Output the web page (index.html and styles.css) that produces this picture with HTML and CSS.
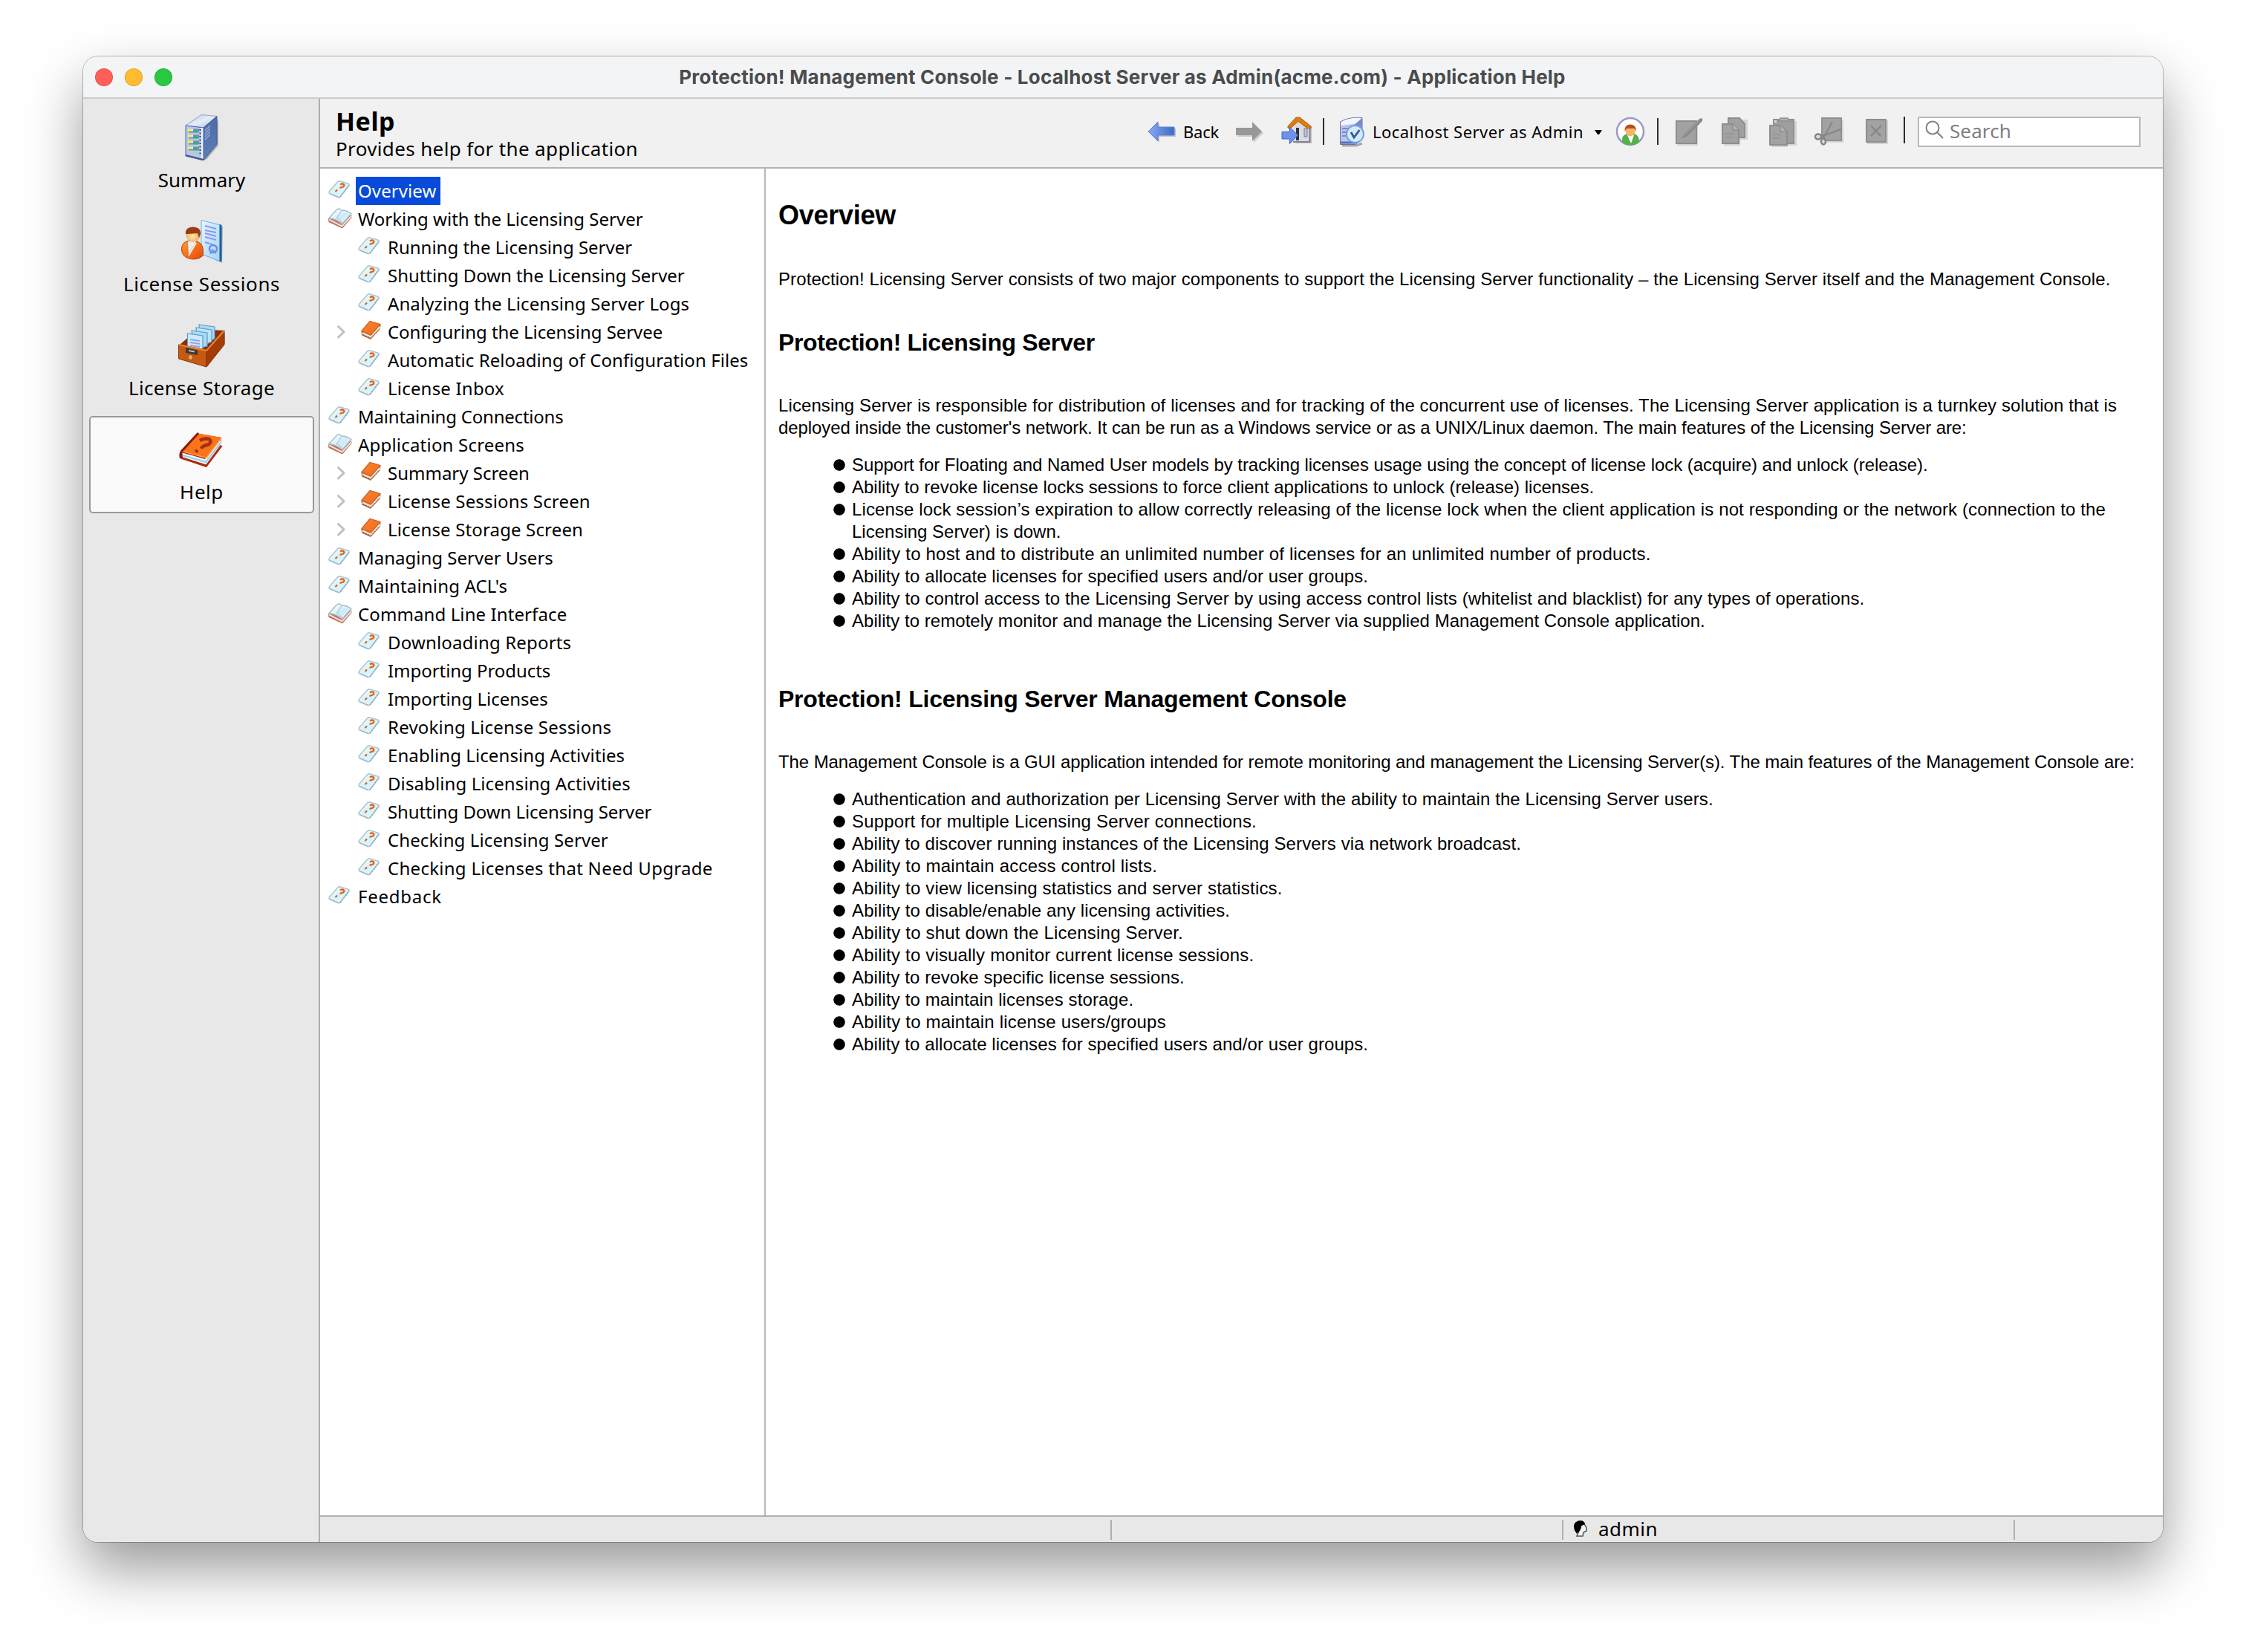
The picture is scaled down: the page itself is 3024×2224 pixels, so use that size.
FILE: index.html
```
<!DOCTYPE html>
<html lang="en">
<head>
<meta charset="utf-8">
<title>Protection! Management Console</title>
<link rel="stylesheet" href="styles.css">
</head>
<body>
<svg class="defs" width="0" height="0" aria-hidden="true">
  <defs>
    <linearGradient id="gPage" x1="0" y1="0" x2="1" y2="1"><stop offset="0" stop-color="#fff"/><stop offset=".5" stop-color="#d5f2fb"/><stop offset="1" stop-color="#e8fafe"/></linearGradient>
    <linearGradient id="gOrange" x1="0" y1="0" x2="1" y2="1"><stop offset="0" stop-color="#f98436"/><stop offset="1" stop-color="#f46a14"/></linearGradient>
    <linearGradient id="gBlue" x1="0" y1="0" x2="1" y2="0"><stop offset="0" stop-color="#8ea6f4"/><stop offset="1" stop-color="#3c6cc4"/></linearGradient>
    <linearGradient id="gSide" x1="0" y1="0" x2="0" y2="1"><stop offset="0" stop-color="#4c6aa4"/><stop offset="1" stop-color="#5f7fba"/></linearGradient>
    <linearGradient id="gTop" x1="0" y1="0" x2="1" y2="1"><stop offset="0" stop-color="#b4c4e2"/><stop offset=".5" stop-color="#e6eefa"/><stop offset="1" stop-color="#a4b6da"/></linearGradient>
    <linearGradient id="gDoc" x1="0" y1="0" x2="1" y2="1"><stop offset="0" stop-color="#e6f6ff"/><stop offset="1" stop-color="#9cd6fb"/></linearGradient>
    <radialGradient id="gSkin" cx=".45" cy=".6" r=".6"><stop offset="0" stop-color="#ffe6a8"/><stop offset="1" stop-color="#f0a050"/></radialGradient>
    <linearGradient id="gBody" x1="0" y1="0" x2="1" y2="1"><stop offset="0" stop-color="#ffa02c"/><stop offset="1" stop-color="#e8440a"/></linearGradient>
    <symbol id="page" viewBox="0 0 39 38">
      <path d="M3.500 19.500 14.500 7q1.500-1.500 3.500-1l10.500 3q2.500 1 1 3.200L18.500 26.500q-1.500 1.600-3.500 1L4.500 23q-2.200-1.200-1-3.500z" fill="url(#gPage)" stroke="#b4c4cc" stroke-width="1.600"/>
      <path d="M18 27 30 11.500" stroke="#86a8bc" stroke-width="1.500" stroke-dasharray="2.500 1.200" fill="none"/>
      <path d="M4 22.500 16 27.500" stroke="#9ab8c8" stroke-width="1.300" fill="none"/>
      <path d="M18 10.500q2.500-1.800 4.500-.500 2 1.800-.500 3.500l-4.500 1.500M14 17.500l-2.500 2.500" fill="none" stroke="#e0600e" stroke-width="2.200"/>
    </symbol>
    <symbol id="open" viewBox="0 0 39 38">
      <path d="M2 19 10 9 34 14 33.500 17 21 31.500 2.500 23z" fill="#c86a50"/>
      <path d="M3 19.500 20.500 28.500 33.500 14.500" fill="none" stroke="#e4e4e4" stroke-width="2"/>
      <path d="M3 17.500 13.500 6q4-2.500 6.500 1.500 5-1.500 13 4L20.500 25.500Q15 19.500 3 17.500z" fill="url(#gPage)" stroke="#a9bccb" stroke-width="1.400"/>
      <path d="M19.500 8.500 13.500 17.500q5 2 7 6.500" fill="none" stroke="#a8c4d8" stroke-width="1.300"/>
      <path d="M15.500 17 23.500 9.500 30 12 21 21.500z" fill="#cfecf8"/>
    </symbol>
    <symbol id="closed" viewBox="0 0 39 38">
      <path d="M6.500 18 18 5 32.500 9.500 32 15 19 29 7 23.500z" fill="#b46a3a"/>
      <path d="M8 20.500 19 25.500 31.500 12" fill="none" stroke="#eee6dc" stroke-width="3"/>
      <path d="M9 22.500 19 27 31 14.500" fill="none" stroke="#7b5038" stroke-width="1" stroke-dasharray="2 1.500"/>
      <path d="M7 17.500 18 4.500 32 8.500 19.500 23z" fill="url(#gOrange)" stroke="#c8622a" stroke-width="1.200"/>
    </symbol>
    <symbol id="chev" viewBox="0 0 40 38"><path d="M15.500 11.500 23 18.800 15.500 26" fill="none" stroke="#c0c0c0" stroke-width="3" stroke-linecap="round" stroke-linejoin="round"/></symbol>
  </defs>
</svg>

<div class="window">
  <header class="titlebar">
    <div class="lights"><i class="light red"></i><i class="light yellow"></i><i class="light green"></i></div>
    <div class="title"><span class="p20">Protection! Management Console - Localhost Server as Admin(acme.com) - Application Help</span></div>
  </header>
  <div class="main">
    <nav class="sidebar">
      <a class="item">
        <svg width="64" height="64" viewBox="0 0 64 64">
          <path d="M36 65 54 44 54 8 40 40z" fill="#000" opacity=".25"/>
          <path d="M10 17 31 2.500 52 4.500 34 20z" fill="url(#gTop)" stroke="#93a6cc"/>
          <path d="M34 20 52 4.500V42L34 64z" fill="url(#gSide)" stroke="#3f5c94"/>
          <path d="M10 17 34 20V64L10 58z" fill="#b9c8e2" stroke="#4d6aa2"/>
          <path d="M32 20V62" stroke="#e8f0fa" stroke-width="2.500"/>
          <path d="M14 24H28M14 32H28M14 40H28M14 48H28" stroke="#6f8cc0" stroke-width="5"/>
          <path d="M13 23H20M13 31H20M13 39H20M13 47H20" stroke="#eef0e0" stroke-width="3"/>
          <path d="M14 23H17M14 31H17M14 39H17M14 47H17" stroke="#ffee00" stroke-width="3"/>
          <path d="M22 25H25M22 33H25M22 41H25M22 49H25" stroke="#08d818" stroke-width="3"/>
          <path d="M29.500 22V58" stroke="#2c4884" stroke-width="2" stroke-dasharray="2 2.500"/>
          <path d="M36 24 43 17M36 28 43 21M36 32 43 25M36 36 43 29" stroke="#93a9d4" stroke-width="1.500"/>
          <path d="M10 57 34 63" stroke="#3c598f" stroke-width="2"/>
        </svg>
        <span>Summary</span>
      </a>
      <a class="item">
        <svg width="64" height="64" viewBox="0 0 64 64">
          <path d="M32 50 59 62 60 12z" fill="#000" opacity=".25"/>
          <path d="M31 4.500 57 11V60L31 50z" fill="url(#gDoc)" stroke="#7fa6d8"/>
          <path d="M57 10.500V60" stroke="#1d5f9c" stroke-width="3"/>
          <path d="M36 12 51 16M36 18 51 21M36 22 51 26M36 27 51 31M36 34 46 37" stroke="#8f96ee" stroke-width="2"/>
          <circle cx="47" cy="43" r="5" fill="none" stroke="#7388e8" stroke-width="2.500"/><path d="M43 50 46 44 51 49" stroke="#7388e8" stroke-width="1.500" fill="none"/>
          <path d="M4.500 43q0-9 10-11h9q9 3 10 12v8q-5 5-12 5-9 0-14-5-3-3-3-9z" fill="url(#gBody)" stroke="#b8430f"/>
          <path d="M13 33 14 50 24 33z" fill="#e4effa"/><path d="M14 52 24 35" stroke="#fff" stroke-width="1.500"/>
          <ellipse cx="20" cy="24" rx="9.500" ry="10" fill="url(#gSkin)"/>
          <path d="M10 23q-1-9 10-9.500 11 .500 10 9.500l-2 5-2-6q-9 1-16 1z" fill="#9c3a14"/>
        </svg>
        <span class="p55">License Sessions</span>
      </a>
      <a class="item">
        <svg width="64" height="64" viewBox="0 0 64 64">
          <path d="M38 63 63 30V15L50 40z" fill="#000" opacity=".3"/>
          <path d="M1 33 26 11 62 13 38 40z" fill="#8c2e06"/>
          <path d="M28 5 49 8V24L30 34z" fill="#a9daf6" stroke="#5b9cc8" stroke-width="1.200"/>
          <path d="M24 9 45 12V28L26 36z" fill="#bbe4fa" stroke="#5b9cc8" stroke-width="1.200"/>
          <path d="M18 13 39 16V34L22 38z" fill="#a9daf6" stroke="#5b9cc8" stroke-width="1.200"/>
          <path d="M12.500 17 33 20V42L12.500 36z" fill="#cdeaff" stroke="#5b9cc8" stroke-width="1.200"/>
          <path d="M16 25 29 27M16 29 29 31M16 33 29 35" stroke="#9aa0e6" stroke-width="2"/>
          <path d="M0.500 32 38 39V62L0.500 51z" fill="#c65a10" stroke="#8f3606"/>
          <path d="M38 39 62 13V32L38 62z" fill="#a63c05" stroke="#8a3104"/>
          <path d="M1 32 38 40 61 14" fill="none" stroke="#e38a38" stroke-width="2"/>
          <path d="M10 36 26 39.500V46L10 43z" fill="#3d3835"/><path d="M14 40 22 41.500" stroke="#bbb" stroke-width="2"/>
          <circle cx="16.500" cy="49" r="3.500" fill="#f0a868" stroke="#a04408"/>
        </svg>
        <span class="p32">License Storage</span>
      </a>
      <a class="item active">
        <svg width="64" height="64" viewBox="0 0 64 64">
          <path d="M3 36 28 12 58 17 57 28 38 57 4 45z" fill="#a41e06"/>
          <path d="M5.500 37.500 36 46 57 19 57.500 26 37.500 53.500 6 43.500z" fill="#e8fbff"/>
          <path d="M6 41 37 50 57 24" fill="none" stroke="#9ccbe0" stroke-width="2"/>
          <path d="M4 44.500 37.500 55.500 58.500 28" fill="none" stroke="#b02a0a" stroke-width="2.500"/>
          <path d="M4.500 34.500 27 11.500 59 17.500 38 44.500z" fill="#fa7419"/>
          <path d="M5 35.500 38 44.500 58 18" fill="none" stroke="#ffa65c" stroke-width="1.500"/>
          <path d="M3.500 45q-1.500-6 1-9.500L27 11" fill="none" stroke="#8e1408" stroke-width="3"/>
          <path d="M29 21q7-4 13-1.500 4 4-2.500 7.500-7 1-8.500 5M26 34l-2.500 2.500" fill="none" stroke="#a82e10" stroke-width="4.500"/>
        </svg>
        <span class="p55">Help</span>
      </a>
    </nav>
    <section class="workspace">
      <div class="header">
        <div class="heading">
          <h1><span class="p55">Help</span></h1>
          <p><span class="p36">Provides help for the application</span></p>
        </div>
        <div class="toolbar">
          <svg width="40" height="44"><path d="M4 24 17 11V18H39V29H17V37z" opacity=".2"/><path d="M2 22 15 9V16H37V27H15V35z" fill="url(#gBlue)" stroke="#5f80d8"/></svg>
          <span class="tb-label back n22">Back</span>
          <svg class="fwd" width="40" height="44"><path d="M4 19H26V11L39 24 26 37V29H4z" opacity=".15"/><path d="M2 17H24V9L37 22 24 35V27H2z" fill="#989898"/></svg>
          <svg class="home" width="44" height="44"><path d="M20 38H42V14z" opacity=".2"/><path d="M17 17 24 9 38 17V36H17z" fill="#dcdbe2"/><path d="M17 36H39.500V17" fill="none" stroke="#85839a" stroke-width="2"/><path d="M21 17H25V34H21z" fill="#30323c"/><path d="M32 18H36V29H32z" fill="#c2c4d6" stroke="#777998"/><path d="M10 15 21 3H26L41 15V17.500H36L24 8.500 13 18.500 10 17z" fill="#d97e14" stroke="#b35a10"/><path d="M2 22.500H12.500V16L23.500 27 12.500 38.500V32H2z" fill="#6d92ec" stroke="#3e66c4"/></svg>
          <i class="sep s1"></i>
          <svg class="srv" width="38" height="44"><path d="M5 41H24L32 38" stroke="#000" stroke-width="3" opacity=".3" fill="none"/><path d="M2.500 9Q14 2 32 3.500V32L23 39.500H2.500z" fill="#bcc4ec" stroke="#6a70b0"/><path d="M3 9.500Q14 3 31 4L23 11.500 3 14z" fill="#f4f6ff"/><path d="M23 11.500V39M5 18H15M5 23H11M5 28H10" stroke="#8088c4" stroke-width="2"/><path d="M24 11 32 4V32L24 39z" fill="#7d88cc"/><path d="M3 37H22" stroke="#5870c0" stroke-width="3"/><circle cx="22.500" cy="25.500" r="11.500" fill="#d2ebff" stroke="#6ba3dc" stroke-width="2"/><path d="M17 23 21 30 28.500 20" fill="none" stroke="#3a5490" stroke-width="2.800"/></svg>
          <span class="tb-label conn p46">Localhost Server as Admin</span>
          <svg class="caret" width="12" height="44"><path d="M1 20H11L7 26H5z"/></svg>
          <svg class="user" width="42" height="44"><circle cx="20" cy="22" r="18" fill="#fff" stroke="#9a98c4" stroke-width="2.500"/><path d="M9 37q-1-11 7-12h9q8 2 6.500 12-5 3.500-11 3.500T9 37z" fill="#56b04a"/><path d="M16 27H25L21 38z" fill="#fff"/><ellipse cx="20" cy="21" rx="6.500" ry="7.500" fill="#f8b468"/><path d="M12.500 22q-1-9 7.500-9.500 9 .500 7.500 9.500l-2-4h-10.500z" fill="#b4501c"/></svg>
          <i class="sep s2"></i>
          <svg class="edit" width="42" height="44"><path d="M5 9H33V41H5z" opacity=".12"/><path d="M4 8H31V38H4z" fill="#a2a2a2" stroke="#8e8e8e" stroke-width="2"/><path d="M11 32 15 25 35 5 39 4V8L19 28z" fill="#8a8a8a"/><path d="M16 26 34 8" stroke="#aaa" stroke-width="1"/></svg>
          <svg class="copy" width="40" height="44"><path d="M13 6H38V33H28V41H6z" opacity=".12"/><path d="M12 4H27L34 12V30H12z" fill="#a0a0a0" stroke="#8e8e8e" stroke-width="2"/><path d="M4 12H18L26 20V38H4z" fill="#a2a2a2" stroke="#8e8e8e" stroke-width="2"/><path d="M18 12V20H26" fill="#b4b4b4" stroke="#8e8e8e" stroke-width="1.500"/><path d="M8 25H20M8 30H20" stroke="#949494" stroke-width="1.500"/></svg>
          <svg class="paste" width="40" height="44"><path d="M10 8H39V41H27V43H5z" opacity=".12"/><path d="M8 6H35V38H8z" fill="#9e9e9e" stroke="#909090" stroke-width="2"/><path d="M14 8 17 4H27L30 8z" fill="#b2b2b2" stroke="#909090" stroke-width="1.500"/><rect x="9" y="7" width="3" height="3" fill="#ddd"/><path d="M3 14H17L26 22V40H3z" fill="#a2a2a2" stroke="#8e8e8e" stroke-width="2"/><path d="M17 14V22H25" fill="#b4b4b4" stroke="#8e8e8e" stroke-width="1.500"/><path d="M7 26H18M7 31H18" stroke="#949494" stroke-width="1.500"/></svg>
          <svg class="cut" width="42" height="44"><path d="M13 6H40V37H13z" opacity=".12"/><path d="M11 4H37V34H11z" fill="#a2a2a2" stroke="#929292" stroke-width="2"/><path d="M13 31 25 9M9 29 37 19" stroke="#848484" stroke-width="2" fill="none"/><ellipse cx="6" cy="29" rx="4" ry="3.500" fill="#ddd" stroke="#858585" stroke-width="2.500"/><ellipse cx="13" cy="35.500" rx="3" ry="4" fill="#ddd" stroke="#858585" stroke-width="2.500"/></svg>
          <svg class="del" width="36" height="44"><path d="M4 7H32V39H4z" opacity=".12"/><path d="M3 6H29V36H3z" fill="#a2a2a2" stroke="#8e8e8e" stroke-width="2"/><path d="M9 14 22 28M23 14 9 28" stroke="#858585" stroke-width="2"/></svg>
          <i class="sep s3"></i>
          <div class="search">
            <svg width="41" height="36"><circle cx="18" cy="13" r="8.500" fill="none" stroke="#808080" stroke-width="2"/><path d="M24 19 32 27" stroke="#808080" stroke-width="2"/></svg>
            <span class="p10">Search</span>
          </div>
        </div>
      </div>
      <div class="split">
        <ul class="tree">
          <li><svg class="ic"><use href="#page"/></svg><span class="selected p10">Overview</span></li>
          <li><svg class="ic"><use href="#open"/></svg><span>Working with the Licensing Server</span></li>
          <li class="sub"><svg class="ic"><use href="#page"/></svg><span>Running the Licensing Server</span></li>
          <li class="sub"><svg class="ic"><use href="#page"/></svg><span class="n05">Shutting Down the Licensing Server</span></li>
          <li class="sub"><svg class="ic"><use href="#page"/></svg><span class="p10">Analyzing the Licensing Server Logs</span></li>
          <li><svg class="tog"><use href="#chev"/></svg><svg class="ic"><use href="#closed"/></svg><span class="n05">Configuring the Licensing Servee</span></li>
          <li class="sub"><svg class="ic"><use href="#page"/></svg><span class="p08">Automatic Reloading of Configuration Files</span></li>
          <li class="sub"><svg class="ic"><use href="#page"/></svg><span class="p20">License Inbox</span></li>
          <li><svg class="ic"><use href="#page"/></svg><span class="n22">Maintaining Connections</span></li>
          <li><svg class="ic"><use href="#open"/></svg><span class="p20">Application Screens</span></li>
          <li><svg class="tog"><use href="#chev"/></svg><svg class="ic"><use href="#closed"/></svg><span>Summary Screen</span></li>
          <li><svg class="tog"><use href="#chev"/></svg><svg class="ic"><use href="#closed"/></svg><span class="p17">License Sessions Screen</span></li>
          <li><svg class="tog"><use href="#chev"/></svg><svg class="ic"><use href="#closed"/></svg><span class="p15">License Storage Screen</span></li>
          <li><svg class="ic"><use href="#page"/></svg><span>Managing Server Users</span></li>
          <li><svg class="ic"><use href="#page"/></svg><span class="p17">Maintaining ACL's</span></li>
          <li><svg class="ic"><use href="#open"/></svg><span class="p10">Command Line Interface</span></li>
          <li class="sub"><svg class="ic"><use href="#page"/></svg><span class="p17">Downloading Reports</span></li>
          <li class="sub"><svg class="ic"><use href="#page"/></svg><span class="n05">Importing Products</span></li>
          <li class="sub"><svg class="ic"><use href="#page"/></svg><span>Importing Licenses</span></li>
          <li class="sub"><svg class="ic"><use href="#page"/></svg><span class="p20">Revoking License Sessions</span></li>
          <li class="sub"><svg class="ic"><use href="#page"/></svg><span class="p08">Enabling Licensing Activities</span></li>
          <li class="sub"><svg class="ic"><use href="#page"/></svg><span class="p10">Disabling Licensing Activities</span></li>
          <li class="sub"><svg class="ic"><use href="#page"/></svg><span class="n09">Shutting Down Licensing Server</span></li>
          <li class="sub"><svg class="ic"><use href="#page"/></svg><span class="p10">Checking Licensing Server</span></li>
          <li class="sub"><svg class="ic"><use href="#page"/></svg><span class="p28">Checking Licenses that Need Upgrade</span></li>
          <li><svg class="ic"><use href="#page"/></svg><span class="p75">Feedback</span></li>
        </ul>
        <article class="doc">
          <h1><span class="n27">Overview</span></h1>
          <p><span class="p10">Protection! Licensing Server consists of two major components to support the Licensing Server functionality – the Licensing Server itself and the Management Console.</span></p>
          <h2><span class="n35">Protection! Licensing Server</span></h2>
          <p><span class="p10">Licensing Server is responsible for distribution of licenses and for tracking of the concurrent use of licenses. The Licensing Server application is a turnkey solution that is</span><br><span class="n09">deployed inside the customer's network. It can be run as a Windows service or as a UNIX/Linux daemon. The main features of the Licensing Server are:</span></p>
          <ul>
            <li><span class="n05">Support for Floating and Named User models by tracking licenses usage using the concept of license lock (acquire) and unlock (release).</span></li>
            <li><span>Ability to revoke license locks sessions to force client applications to unlock (release) licenses.</span></li>
            <li><span class="p12">License lock session’s expiration to allow correctly releasing of the license lock when the client application is not responding or the network (connection to the</span><br><span>Licensing Server) is down.</span></li>
            <li><span class="p20">Ability to host and to distribute an unlimited number of licenses for an unlimited number of products.</span></li>
            <li><span class="p08">Ability to allocate licenses for specified users and/or user groups.</span></li>
            <li><span class="p10">Ability to control access to the Licensing Server by using access control lists (whitelist and blacklist) for any types of operations.</span></li>
            <li><span class="p04">Ability to remotely monitor and manage the Licensing Server via supplied Management Console application.</span></li>
          </ul>
          <h2 class="second"><span class="n22">Protection! Licensing Server Management Console</span></h2>
          <p><span class="n09">The Management Console is a GUI application intended for remote monitoring and management the Licensing Server(s). The main features of the Management Console are:</span></p>
          <ul>
            <li><span class="p10">Authentication and authorization per Licensing Server with the ability to maintain the Licensing Server users.</span></li>
            <li><span class="p20">Support for multiple Licensing Server connections.</span></li>
            <li><span class="p10">Ability to discover running instances of the Licensing Servers via network broadcast.</span></li>
            <li><span class="p20">Ability to maintain access control lists.</span></li>
            <li><span class="p17">Ability to view licensing statistics and server statistics.</span></li>
            <li><span class="p12">Ability to disable/enable any licensing activities.</span></li>
            <li><span class="p20">Ability to shut down the Licensing Server.</span></li>
            <li><span class="p17">Ability to visually monitor current license sessions.</span></li>
            <li><span class="p08">Ability to revoke specific license sessions.</span></li>
            <li><span class="p12">Ability to maintain licenses storage.</span></li>
            <li><span class="p20">Ability to maintain license users/groups</span></li>
            <li><span class="p08">Ability to allocate licenses for specified users and/or user groups.</span></li>
          </ul>
        </article>
      </div>
      <footer class="status">
        <div class="cell c1"></div>
        <div class="cell c2"></div>
        <div class="cell c3">
          <svg width="22" height="24"><path d="M3 14Q0 4 8 1.500 16 0 17 6L12 8 11 13 7 15 6 19z"/><path d="M16 6q4 4 3 9l-4 2-1 5H6l2-5" fill="#f2f2f2" stroke="#555" stroke-width="1.500"/><path d="M3 14Q0 4 8 1.500 16 0 17 6L12 8 11 13 8 18 6 17z"/></svg>
          <span class="p46">admin</span>
        </div>
        <div class="cell c4"></div>
      </footer>
    </section>
  </div>
</div>
</body>
</html>
```
FILE: styles.css
```
* { box-sizing: border-box; margin: 0; padding: 0; }
html, body { width: 3024px; height: 2224px; overflow: hidden; background: #fff; }
body { padding: 76px 112px 148px; font-family: "Noto Sans", sans-serif; font-size: 26px; color: #000; }
.defs { position: absolute; }
svg { display: block; flex: none; }
span { white-space: nowrap; }

.window { height: 2000px; display: flex; flex-direction: column; border-radius: 20px; overflow: hidden; background: #fff; box-shadow: 0 0 0 1px rgba(0,0,0,.25), 0 36px 76px rgba(0,0,0,.4); }
.titlebar { height: 57px; flex: none; background: #f3f4f6; border-bottom: 2px solid #cbcbcb; display: grid; grid-template-columns: 1fr auto 1fr; align-items: center; }
.lights { display: flex; gap: 16px; padding-left: 16px; }
.light { width: 24px; height: 24px; border-radius: 50%; border: 1px solid rgba(0,0,0,.12); }
.red { background: #ff5f57; }
.yellow { background: #febc2e; }
.green { background: #28c840; }
.title { font: bold 26px/55px Inter, sans-serif; color: #4a4c4d; margin-right: 2px; }

.main { flex: 1; display: flex; min-height: 0; }
.sidebar { width: 319px; flex: none; padding: 7px 6px 7px 8px; background: #e8e8e8; border-right: 2px solid #adadad; display: flex; flex-direction: column; gap: 9px; }
.item { height: 131px; padding-top: 12px; display: flex; flex-direction: column; align-items: center; gap: 8px; line-height: 36px; border-radius: 5px; }
.item.active { background: #fafafa; box-shadow: inset 0 0 0 2px #999; }
.item svg { margin-left: 1px; }

.workspace { flex: 1; display: flex; flex-direction: column; min-width: 0; }
.header { height: 94px; flex: none; background: #f1f1f1; border-bottom: 2px solid #b3b3b3; display: flex; justify-content: space-between; }
.heading { padding: 10px 0 0 21px; }
.heading h1 { font-size: 34px; line-height: 41px; }
.heading p { line-height: 32px; }
.toolbar { display: flex; align-items: center; padding: 0 30px 4px 0; }
.tb-label { font-size: 22px; line-height: 44px; }
.back { margin-left: 9px; width: 50px; }
.fwd { margin-left: 19px; }
.home { margin-left: 22px; }
.sep { width: 2px; height: 36px; background: #2c2c2c; }
.s1 { margin-left: 13px; }
.srv { margin-left: 19px; }
.conn { margin-left: 8px; width: 288px; }
.caret { margin-left: 10px; }
.user { margin-left: 17px; }
.s2 { margin-left: 14px; }
.edit { margin-left: 20px; }
.copy { margin-left: 20px; }
.paste { margin-left: 25px; }
.cut { margin-left: 22px; }
.del { margin-left: 26px; }
.s3 { margin-left: 17px; margin-bottom: 4px; }
.search { margin-left: 17px; width: 300px; height: 41px; background: #fff; border: 2px solid #b8b8b8; display: flex; line-height: 34px; color: #808080; }

.split { flex: 1; display: flex; min-height: 0; }
.tree { width: 600px; flex: none; padding-top: 11px; border-right: 2px solid #b8b8b8; list-style: none; font-size: 24px; }
.tree li { height: 38px; padding-left: 9px; display: flex; line-height: 38px; }
.tree li.sub { padding-left: 49px; }
.ic { width: 39px; height: 38px; }
.tog { width: 40px; height: 38px; }
.tree span { padding: 0 5px 0 3px; }
.tree .selected { background: #084bdb; color: #fff; }

.doc { flex: 1; padding: 42px 0 0 17px; font: 24px/30px "Liberation Sans", sans-serif; }
.doc h1 { font-size: 36px; line-height: 42px; margin-bottom: 50px; }
.doc h2 { font-size: 32px; line-height: 38px; margin: 51px 0; }
.doc h2.second { margin-top: 71px; }
.doc ul { list-style: none; margin-top: 20px; }
.doc li { padding-left: 99px; background: radial-gradient(circle at 82px 15px, #000 7.300px, transparent 8.100px); }

.status { height: 36px; flex: none; background: #e8e8e8; border-top: 2px solid #b0b0b0; display: flex; align-items: center; }
.cell { height: 27px; display: flex; align-items: center; border-right: 2px solid #b0b0b0; line-height: 34px; }
.c1 { width: 1066px; }
.c2 { width: 608px; }
.c3 { width: 608px; padding: 0 0 2px 12px; gap: 13px; }
.c4 { border: 0; }

/* tracking steps */
.n35 { letter-spacing: -.35px; }
.n27 { letter-spacing: -.27px; }
.n22 { letter-spacing: -.22px; }
.n09 { letter-spacing: -.09px; }
.n05 { letter-spacing: -.05px; }
.p04 { letter-spacing: .04px; }
.p08 { letter-spacing: .08px; }
.p10 { letter-spacing: .1px; }
.p12 { letter-spacing: .12px; }
.p15 { letter-spacing: .15px; }
.p17 { letter-spacing: .17px; }
.p20 { letter-spacing: .2px; }
.p28 { letter-spacing: .28px; }
.p32 { letter-spacing: .32px; }
.p36 { letter-spacing: .36px; }
.p46 { letter-spacing: .46px; }
.p55 { letter-spacing: .55px; }
.p75 { letter-spacing: .75px; }
```
